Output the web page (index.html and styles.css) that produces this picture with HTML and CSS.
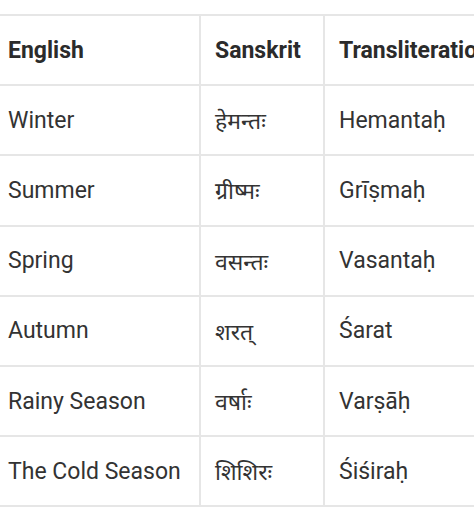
FILE: index.html
```html
<!DOCTYPE html>
<html>
<head>
<meta charset="utf-8">
<link rel="stylesheet" href="styles.css">
</head>
<body>
<div class="wrap">
<table class="seasons">
<thead>
<tr><th class="c1">English</th><th class="c2">Sanskrit</th><th class="c3">Transliteration</th></tr>
</thead>
<tbody>
<tr><td>Winter</td><td>हेमन्तः</td><td>Hemantaḥ</td></tr>
<tr><td>Summer</td><td>ग्रीष्मः</td><td>Grīṣmaḥ</td></tr>
<tr><td>Spring</td><td>वसन्तः</td><td>Vasantaḥ</td></tr>
<tr><td>Autumn</td><td>शरत्</td><td>Śarat</td></tr>
<tr><td>Rainy Season</td><td>वर्षाः</td><td>Varṣāḥ</td></tr>
<tr><td>The Cold Season</td><td>शिशिरः</td><td>Śiśiraḥ</td></tr>
</tbody>
</table>
</div>
</body>
</html>
```
FILE: styles.css
```css
html, body {
  margin: 0;
  padding: 0;
  background: #ffffff;
  overflow: hidden;
}
.wrap {
  padding-top: 14px;
  width: 474px;
  overflow: hidden;
}
.seasons {
  border-collapse: collapse;
  table-layout: fixed;
  width: 600px;
  font-family: Roboto, "Noto Sans", "Noto Sans Devanagari", sans-serif;
  font-size: 23px;
  color: #333333;
}
.seasons th, .seasons td {
  border: 2px solid #e6e6e6;
  height: 70.2px;
  padding: 0 0 0 14px;
  text-align: left;
  vertical-align: middle;
  box-sizing: border-box;
  white-space: nowrap;
  overflow: hidden;
}
.seasons tr > :first-child {
  border-left: none;
  padding-left: 8px;
}
.seasons th {
  font-weight: 700;
  color: #2b2b2b;
}
.c1 { width: 200px; }
.c2 { width: 124px; }
.c3 { width: 276px; }
```
